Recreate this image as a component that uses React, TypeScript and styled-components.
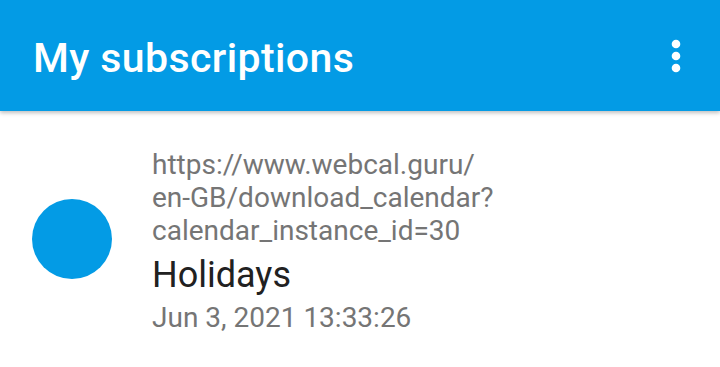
import React, { FunctionComponent } from 'react';
import styled, { createGlobalStyle } from 'styled-components';

const GlobalStyle = createGlobalStyle`
    html, body {
        margin: 0;
        padding: 0;
        background: #ffffff;
        font-family: Roboto, "Noto Sans", sans-serif;
    }
`;

const Page = styled.div`
    width: 720px;
    height: 367px;
    overflow: hidden;
    background: #ffffff;
`;

const Toolbar = styled.header`
    display: flex;
    align-items: center;
    justify-content: space-between;
    height: 111px;
    padding: 0 20px 0 33px;
    box-sizing: border-box;
    background-color: #039be5;
    box-shadow: 0 2px 4px rgba(0, 0, 0, 0.25);
    position: relative;
    z-index: 1;
`;

const Title = styled.h1`
    margin: 0;
    padding-top: 6px;
    color: #ffffff;
    font-size: 41px;
    line-height: 49px;
    font-weight: 500;
    letter-spacing: 0.4px;
`;

const MenuButton = styled.div`
    display: flex;
    align-items: center;
    justify-content: center;
    width: 48px;
    height: 48px;
`;

const Row = styled.div`
    display: flex;
    align-items: flex-start;
    padding: 37px 32px 0 32px;
`;

const Avatar = styled.div<{ color: string }>`
    flex: none;
    width: 80px;
    height: 80px;
    border-radius: 50%;
    background-color: ${props => props.color};
    margin-right: 40px;
    margin-top: 51px;
`;

const TextColumn = styled.div`
    display: flex;
    flex-direction: column;
`;

const Url = styled.div`
    color: #757575;
    font-size: 28px;
    line-height: 33px;
`;

const Name = styled.div`
    color: #212121;
    font-size: 36px;
    line-height: 48px;
    margin-top: 4px;
`;

const Updated = styled.div`
    color: #757575;
    font-size: 28px;
    line-height: 32px;
    margin-top: 3px;
`;

interface SubscriptionProps {
    urlLines: string[],
    name: string,
    updated: string,
    color: string
}

const Subscription: FunctionComponent<SubscriptionProps> = ({urlLines, name, updated, color}) => (
    <Row>
        <Avatar color={color} />
        <TextColumn>
            {urlLines.map(line => <Url key={line}>{line}</Url>)}
            <Name>{name}</Name>
            <Updated>{updated}</Updated>
        </TextColumn>
    </Row>
);

const MoreIcon = () => (
    <svg width="12" height="36" viewBox="0 0 12 36">
        <circle cx="6" cy="6" r="4.3" fill="#ffffff" />
        <circle cx="6" cy="18" r="4.3" fill="#ffffff" />
        <circle cx="6" cy="30" r="4.3" fill="#ffffff" />
    </svg>
);

const App = () => (
    <Page>
        <GlobalStyle />
        <Toolbar>
            <Title>My subscriptions</Title>
            <MenuButton><MoreIcon /></MenuButton>
        </Toolbar>
        <Subscription
            urlLines={['https://www.webcal.guru/', 'en-GB/download_calendar?', 'calendar_instance_id=30']}
            name="Holidays"
            updated="Jun 3, 2021 13:33:26"
            color="#039be5"
        />
    </Page>
);

export default App;
